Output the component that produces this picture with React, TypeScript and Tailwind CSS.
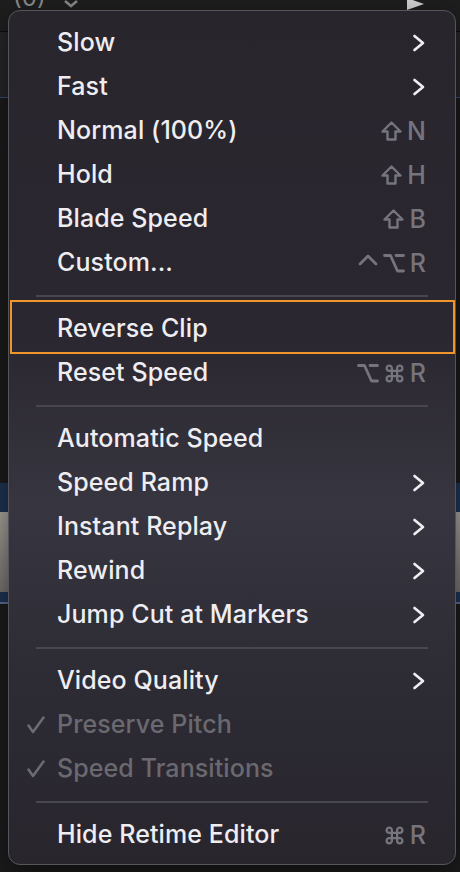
import React from 'react';

type Key = 'shift' | 'ctrl' | 'opt' | 'cmd' | string;

type Item = {
  label: string;
  sub?: boolean;
  keys?: Key[];
  checked?: boolean;
  disabled?: boolean;
  focus?: boolean;
};

const groups: Item[][] = [
  [
    { label: 'Slow', sub: true },
    { label: 'Fast', sub: true },
    { label: 'Normal (100%)', keys: ['shift', 'N'] },
    { label: 'Hold', keys: ['shift', 'H'] },
    { label: 'Blade Speed', keys: ['shift', 'B'] },
    { label: 'Custom...', keys: ['ctrl', 'opt', 'R'] },
  ],
  [
    { label: 'Reverse Clip', focus: true },
    { label: 'Reset Speed', keys: ['opt', 'cmd', 'R'] },
  ],
  [
    { label: 'Automatic Speed' },
    { label: 'Speed Ramp', sub: true },
    { label: 'Instant Replay', sub: true },
    { label: 'Rewind', sub: true },
    { label: 'Jump Cut at Markers', sub: true },
  ],
  [
    { label: 'Video Quality', sub: true },
    { label: 'Preserve Pitch', checked: true, disabled: true },
    { label: 'Speed Transitions', checked: true, disabled: true },
  ],
  [{ label: 'Hide Retime Editor', keys: ['cmd', 'R'] }],
];

const Chevron = () => (
  <svg width="14" height="18" viewBox="0 0 14 18" fill="none" className="text-[#eeedf1]">
    <polyline points="2.5,2 11,9 2.5,16" stroke="currentColor" strokeWidth="2.7" strokeLinecap="round" strokeLinejoin="round" />
  </svg>
);

const Check = () => (
  <svg width="18" height="18" viewBox="0 0 18 18" fill="none">
    <polyline points="1.5,9.5 6,16 16.5,1.5" stroke="#6d6b73" strokeWidth="2.5" strokeLinecap="round" strokeLinejoin="round" />
  </svg>
);

const KeyGlyph = ({ k }: { k: Key }) => {
  const stroke = '#76747c';
  if (k === 'shift')
    return (
      <svg width="21" height="20" viewBox="0 0 21 20" fill="none">
        <path d="M10.5 1.5 L19.5 10.5 H14.5 V18.5 H6.5 V10.5 H1.5 Z" stroke={stroke} strokeWidth="2.4" strokeLinejoin="round" />
      </svg>
    );
  if (k === 'ctrl')
    return (
      <svg width="20" height="20" viewBox="0 0 20 20" fill="none">
        <polyline points="2,11 10,3 18,11" stroke={stroke} strokeWidth="2.8" strokeLinecap="round" strokeLinejoin="round" />
      </svg>
    );
  if (k === 'opt')
    return (
      <svg width="22" height="20" viewBox="0 0 22 20" fill="none">
        <path d="M1.5 2.5 H7.5 L14.5 18 H20.5 M13 2.5 H20.5" stroke={stroke} strokeWidth="2.8" strokeLinecap="round" strokeLinejoin="round" />
      </svg>
    );
  if (k === 'cmd')
    return (
      <svg width="21" height="21" viewBox="0 0 24 24" fill="none">
        <path
          d="M15 6v12a3 3 0 1 0 3-3H6a3 3 0 1 0 3 3V6a3 3 0 1 0-3 3h12a3 3 0 1 0-3-3"
          stroke={stroke}
          strokeWidth="2.6"
          strokeLinecap="round"
          strokeLinejoin="round"
        />
      </svg>
    );
  return <span className="text-[#76747c] leading-none">{k}</span>;
};

const Row = ({ item }: { item: Item }) => (
  <div className="relative h-[44px] flex items-center pr-[29px]">
    <div className="w-[48px] flex items-center justify-start pl-[18px]">{item.checked && <Check />}</div>
    <span className={item.disabled ? 'text-[#6b6970]' : 'text-[#eeedf1]'}>{item.label}</span>
    <div className="ml-auto flex items-center gap-[5px]">
      {item.keys && item.keys.map((k, i) => <KeyGlyph key={i} k={k} />)}
      {item.sub && <Chevron />}
    </div>
    {item.focus && (
      <div className="absolute left-[1px] right-[0px] top-[-7px] h-[54px] border-2 border-[#f0952c] pointer-events-none" />
    )}
  </div>
);

const Separator = () => (
  <div className="h-[22px] flex items-center px-[27px]">
    <div className="h-[2px] w-full bg-[#48464e]" />
  </div>
);

export default function App() {
  return (
    <div
      className="relative w-[460px] h-[872px] overflow-hidden bg-[#1b1b1b]"
      style={{ fontFamily: 'Inter, "Noto Sans", sans-serif' }}
    >
      {/* app behind the menu */}
      <div className="flex flex-col h-full">
        <div className="h-[31px] flex items-start bg-[#1e1e1e] text-[#8a8a8a] text-[24px] leading-none">
          <span className="ml-[13px] -mt-[14px]">(0)</span>
          <svg width="14" height="8" viewBox="0 0 14 8" className="ml-[18px]">
            <polyline points="1,1 7,6 13,1" stroke="#8a8a8a" strokeWidth="2.5" fill="none" />
          </svg>
          <svg width="18" height="10" viewBox="0 0 18 10" className="ml-auto mr-[35px]">
            <polygon points="0,-2 17,4 0,10" fill="#d4d4d4" />
          </svg>
        </div>
        <div className="h-px bg-[#0c0c0c]" />
        <div className="h-[65px] bg-[#262626]" />
        <div className="h-px bg-[#3c4b7c]" />
        <div className="h-[385px] bg-[#1b1b1b]" />
        <div className="h-[29px] bg-[#1f3452]" />
        <div className="h-[80px] bg-[linear-gradient(180deg,#a9a49d,#8a857f_60%,#77736e)]" />
        <div className="h-[10px] bg-[#1f3452]" />
        <div className="h-[2px] bg-[#5a6d94]" />
        <div className="flex-1 bg-[#1c1c1c]" />
      </div>

      {/* context menu */}
      <div className="absolute left-[8px] top-[10px] w-[448px] rounded-[12px] border border-[#57555c] pt-[10px] pb-[7px] text-[25px] font-medium tracking-[0.1px] bg-[linear-gradient(180deg,#28252d_0%,#2a2730_38%,#37353f_58%,#2d2b34_78%,#28252d_100%)] shadow-[0_10px_30px_rgba(0,0,0,0.5)]">
        {groups.map((g, gi) => (
          <div key={gi}>
            {gi > 0 && <Separator />}
            {g.map((item) => (
              <Row key={item.label} item={item} />
            ))}
          </div>
        ))}
      </div>
    </div>
  );
}
